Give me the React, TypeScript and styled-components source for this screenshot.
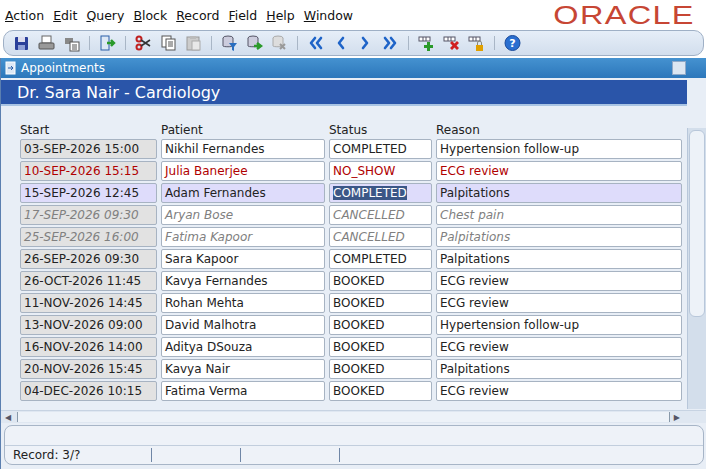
import React from "react";
import styled, { createGlobalStyle } from "styled-components";

const Global = createGlobalStyle`
  html, body { margin: 0; padding: 0; background: #fff; }
  body { font-family: "DejaVu Sans", sans-serif; width: 706px; height: 469px; overflow: hidden; }
`;

const Page = styled.div`
  width: 706px;
  height: 469px;
  display: flex;
  flex-direction: column;
  background: #fff;
`;

const MenuBar = styled.div`
  height: 30px;
  display: flex;
  align-items: center;
  padding: 0 5px;
  font-size: 12.5px;
  color: #111;
`;

const MenuItem = styled.span`
  margin-right: 9px;
  span { text-decoration: underline; }
`;

const Logo = styled.div`
  margin-left: auto;
  margin-right: 6px;
  font-family: "Liberation Sans", sans-serif;
  font-size: 25px;
  letter-spacing: 1px;
  color: #c74634;
  transform: scaleX(1.3);
  transform-origin: right center;
`;

const Toolbar = styled.div`
  height: 24px;
  margin: 0 2px 2px 3px;
  border: 1px solid #9fb0c6;
  border-radius: 10px;
  background: linear-gradient(#e6eef8, #d2deed);
  display: flex;
  align-items: center;
  padding-left: 8px;
  gap: 6px;
`;

const Sep = styled.div`
  width: 1px;
  height: 14px;
  background: #a9b6c6;
  margin: 0 2px;
`;

const Icon = styled.svg`
  width: 19px;
  height: 18px;
`;

const Window = styled.div`
  flex: 1;
  display: flex;
  flex-direction: column;
  background: #e8eef6;
  border-left: 1px solid #5b7fb0;
`;

const TitleBar = styled.div`
  height: 20px;
  background: linear-gradient(#4592d0, #2c77bb);
  color: #fff;
  font-size: 12px;
  display: flex;
  align-items: center;
  padding-left: 4px;
  gap: 4px;
`;

const WinBtn = styled.div`
  margin-left: auto;
  width: 12px;
  height: 12px;
  background: #dbe6f2;
  border: 1px solid #8fa9c8;
  margin-right: 20px;
`;

const Body = styled.div`
  flex: 1;
  display: flex;
`;

const Main = styled.div`
  flex: 1;
  display: flex;
  flex-direction: column;
`;

const Header = styled.div`
  height: 24px;
  margin-top: 2px;
  background: #2a55a9;
  color: #fff;
  font-size: 16px;
  display: flex;
  align-items: center;
  padding-left: 16px;
  border-bottom: 2px solid #a9c4e3;
`;

const Grid = styled.div`
  padding: 17px 0 0 19px;
  display: grid;
  grid-template-columns: 137px 164px 103px 246px;
  column-gap: 4px;
  row-gap: 2px;
  font-size: 12px;
`;

const ColHead = styled.div`
  color: #222;
  height: 14px;
  line-height: 14px;
`;

type Kind = "normal" | "red" | "sel" | "cancel";

const Cell = styled.div<{ $kind: Kind; $ro?: boolean }>`
  height: 18px;
  line-height: 18px;
  padding-left: 3px;
  border: 1px solid #a7b3c2;
  border-radius: 2px;
  white-space: nowrap;
  overflow: hidden;
  background: ${(p) =>
    p.$kind === "sel" ? "#dedcfb" : p.$ro ? "#e2e2e2" : "#fff"};
  color: ${(p) =>
    p.$kind === "red" ? "#b00000" : p.$kind === "cancel" ? "#808080" : "#222"};
  font-style: ${(p) => (p.$kind === "cancel" ? "italic" : "normal")};
`;

const Hl = styled.span`
  background: #3b5787;
  color: #fff;
`;

const VScroll = styled.div`
  width: 18px;
  margin-top: 50px;
  margin-bottom: 1px;
  background: #d3deeb;
  border-left: 1px solid #b8c7da;
  display: flex;
  flex-direction: column;
`;

const Thumb = styled.div`
  height: 185px;
  margin: 2px 1px;
  background: #edf2f8;
  border: 1px solid #b8c7da;
  border-radius: 6px;
`;

const HScroll = styled.div`
  height: 12px;
  background: #dfe7f1;
  border-top: 1px solid #c7d3e2;
  display: flex;
  align-items: center;
  font-size: 8px;
  color: #556;
`;

const HThumb = styled.div`
  flex: 1;
  height: 10px;
  margin: 0 4px 0 6px;
  background: #edf2f8;
  border-left: 1px solid #8899aa;
  border-right: 1px solid #8899aa;
`;

const Status = styled.div`
  height: 38px;
  margin: 2px 2px 4px 3px;
  border: 1px solid #a7b5c7;
  border-radius: 8px;
  background: #eef2f8;
  display: flex;
  flex-direction: column;
  justify-content: flex-end;
  overflow: hidden;
`;

const StatusRow = styled.div`
  height: 18px;
  border-top: 1px solid #c2cedd;
  display: flex;
  align-items: center;
  font-size: 12px;
  color: #222;
`;

const Seg = styled.div<{ $w: number }>`
  width: ${(p) => p.$w}px;
  padding-left: 8px;
  height: 14px;
  border-right: 1px solid #6f86a6;
  line-height: 14px;
`;

const rows: [string, string, string, string, Kind][] = [
  ["03-SEP-2026 15:00", "Nikhil Fernandes", "COMPLETED", "Hypertension follow-up", "normal"],
  ["10-SEP-2026 15:15", "Julia Banerjee", "NO_SHOW", "ECG review", "red"],
  ["15-SEP-2026 12:45", "Adam Fernandes", "COMPLETED", "Palpitations", "sel"],
  ["17-SEP-2026 09:30", "Aryan Bose", "CANCELLED", "Chest pain", "cancel"],
  ["25-SEP-2026 16:00", "Fatima Kapoor", "CANCELLED", "Palpitations", "cancel"],
  ["26-SEP-2026 09:30", "Sara Kapoor", "COMPLETED", "Palpitations", "normal"],
  ["26-OCT-2026 11:45", "Kavya Fernandes", "BOOKED", "ECG review", "normal"],
  ["11-NOV-2026 14:45", "Rohan Mehta", "BOOKED", "ECG review", "normal"],
  ["13-NOV-2026 09:00", "David Malhotra", "BOOKED", "Hypertension follow-up", "normal"],
  ["16-NOV-2026 14:00", "Aditya DSouza", "BOOKED", "ECG review", "normal"],
  ["20-NOV-2026 15:45", "Kavya Nair", "BOOKED", "Palpitations", "normal"],
  ["04-DEC-2026 10:15", "Fatima Verma", "BOOKED", "ECG review", "normal"],
];

const menus = ["Action", "Edit", "Query", "Block", "Record", "Field", "Help", "Window"];

const I = ({ children }: { children: React.ReactNode }) => (
  <Icon viewBox="0 0 19 18">{children}</Icon>
);

const Chev = ({ d, double }: { d: number; double?: boolean }) => (
  <I>
    <g fill="none" stroke="#1f64c8" strokeWidth="2.6" strokeLinecap="round" strokeLinejoin="round"
      transform={d < 0 ? "translate(19 0) scale(-1 1)" : undefined}>
      <path d={double ? "M4 4l4 5-4 5M10 4l4 5-4 5" : "M7 4l4 5-4 5"} />
    </g>
  </I>
);

const Grid3 = ({ color, mark }: { color: string; mark: React.ReactNode }) => (
  <I>
    <rect x="2" y="3" width="11" height="4" fill="#fff" stroke="#556" />
    <line x1="6" y1="3" x2="6" y2="7" stroke="#556" />
    <line x1="9" y1="3" x2="9" y2="7" stroke="#556" />
    <g fill={color}>{mark}</g>
  </I>
);

export default function App() {
  return (
    <Page>
      <Global />
      <MenuBar>
        {menus.map((m) => (
          <MenuItem key={m}>
            <span>{m[0]}</span>
            {m.slice(1)}
          </MenuItem>
        ))}
        <Logo>ORACLE</Logo>
      </MenuBar>
      <Toolbar>
        <I><rect x="3" y="3" width="13" height="13" rx="1" fill="#2a3f9a" /><rect x="6" y="3" width="7" height="5" fill="#dde" /><rect x="6" y="11" width="7" height="5" fill="#8fa0d8" /></I>
        <I><rect x="5" y="2" width="9" height="7" fill="#fff" stroke="#666" /><rect x="2" y="9" width="15" height="6" rx="1" fill="#999" stroke="#555" /></I>
        <I><rect x="3" y="4" width="8" height="6" fill="#888" /><rect x="8" y="8" width="9" height="9" fill="#fff" stroke="#555" /><path d="M10 11h5M10 13h5M10 15h5" stroke="#555" /></I>
        <Sep />
        <I><rect x="3" y="2" width="8" height="14" fill="#dde8f5" stroke="#2a5fa8" /><path d="M9 9h7M13 6l3 3-3 3" stroke="#2a9a2a" strokeWidth="2.4" fill="none" /></I>
        <Sep />
        <I><circle cx="5" cy="5" r="2.5" fill="none" stroke="#c02020" strokeWidth="2" /><circle cx="5" cy="13" r="2.5" fill="none" stroke="#c02020" strokeWidth="2" /><path d="M7 6l9 6M7 12l9-6" stroke="#333" strokeWidth="1.6" /></I>
        <I><rect x="3" y="2" width="9" height="11" fill="#fff" stroke="#555" /><rect x="7" y="5" width="9" height="11" fill="#fff" stroke="#555" /><path d="M9 8h5M9 10h5M9 12h5" stroke="#555" /></I>
        <I><rect x="3" y="3" width="12" height="13" fill="#ccc" stroke="#999" /><rect x="6" y="2" width="6" height="3" fill="#bbb" /><rect x="8" y="7" width="8" height="9" fill="#e8e8e8" stroke="#aaa" /></I>
        <Sep />
        <I><ellipse cx="8" cy="4" rx="5" ry="2" fill="#ccd" stroke="#556" /><path d="M3 4v8c0 1 10 1 10 0V4" fill="#ccd" stroke="#556" /><path d="M9 9h8l-3 4v4l-2-1v-3z" fill="#2a6fc0" /></I>
        <I><ellipse cx="8" cy="4" rx="5" ry="2" fill="#ccd" stroke="#556" /><path d="M3 4v8c0 1 10 1 10 0V4" fill="#ccd" stroke="#556" /><path d="M9 12h5M12 9l4 3-4 3" stroke="#2a9a2a" strokeWidth="2.4" fill="none" /></I>
        <I><ellipse cx="8" cy="4" rx="5" ry="2" fill="#ddd" stroke="#aaa" /><path d="M3 4v8c0 1 10 1 10 0V4" fill="#ddd" stroke="#aaa" /><path d="M10 10l5 5M15 10l-5 5" stroke="#999" strokeWidth="2" /></I>
        <Sep />
        <Chev d={-1} double />
        <Chev d={-1} />
        <Chev d={1} />
        <Chev d={1} double />
        <Sep />
        <Grid3 color="#2a9a2a" mark={<path d="M10 8h3v3h3v3h-3v3h-3v-3H7v-3h3z" />} />
        <Grid3 color="#d02020" mark={<path d="M8 9l2-2 2.5 2.5L15 7l2 2-2.5 2.5L17 14l-2 2-2.5-2.5L10 16l-2-2 2.5-2.5z" />} />
        <Grid3 color="#e0a000" mark={<><rect x="9" y="11" width="7" height="6" /><path d="M10.5 11V9a2 2 0 0 1 4 0v2" fill="none" stroke="#887" /></>} />
        <Sep />
        <I><circle cx="9.5" cy="9" r="7.5" fill="#2a6fd0" stroke="#1a4a9a" /><text x="9.5" y="13" textAnchor="middle" fontSize="11" fontWeight="bold" fill="#fff" fontFamily="DejaVu Sans">?</text></I>
      </Toolbar>
      <Window>
        <TitleBar>
          <svg width="12" height="14" viewBox="0 0 12 14"><rect x="1" y="1" width="9" height="12" fill="#dde8f5" stroke="#fff" /><path d="M3 7h5M6 5l2 2-2 2" stroke="#2a5fa8" fill="none" /></svg>
          Appointments
          <WinBtn />
        </TitleBar>
        <Body>
          <Main>
            <Header>Dr. Sara Nair - Cardiology</Header>
            <Grid>
              <ColHead>Start</ColHead>
              <ColHead>Patient</ColHead>
              <ColHead>Status</ColHead>
              <ColHead>Reason</ColHead>
              {rows.map(([s, p, st, r, k]) => (
                <React.Fragment key={s}>
                  <Cell $kind={k} $ro>{s}</Cell>
                  <Cell $kind={k}>{p}</Cell>
                  <Cell $kind={k}>{k === "sel" ? <Hl>{st}</Hl> : st}</Cell>
                  <Cell $kind={k}>{r}</Cell>
                </React.Fragment>
              ))}
            </Grid>
          </Main>
          <VScroll>
            <Thumb />
          </VScroll>
        </Body>
        <HScroll>
          <span style={{ paddingLeft: 4 }}>◀</span>
          <HThumb />
          <span style={{ paddingRight: 26 }}>▶</span>
        </HScroll>
        <Status>
          <StatusRow>
            <Seg $w={138}>Record: 3/?</Seg>
            <Seg $w={80} />
            <Seg $w={90} />
          </StatusRow>
        </Status>
      </Window>
    </Page>
  );
}
